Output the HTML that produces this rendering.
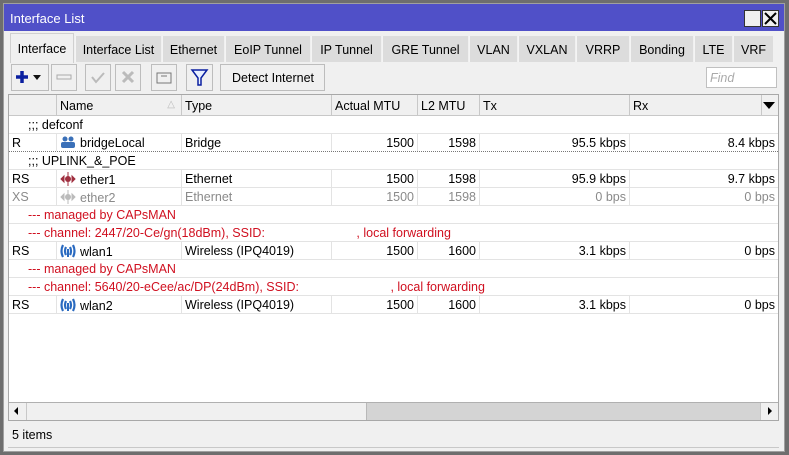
<!DOCTYPE html>
<html><head><meta charset="utf-8"><style>
*{box-sizing:border-box;margin:0;padding:0}
body{width:789px;height:455px;overflow:hidden;background:#6e6e6e;font-family:"Liberation Sans",Arial,sans-serif;font-size:12.5px;color:#000;position:relative}
.win{position:absolute;left:3px;top:3px;width:782px;height:449px;background:#f0f0f0;border:1px solid #a0a0a0}
.title{position:absolute;left:0;top:0;width:780px;height:27px;background:#5050c8;color:#fff;font-size:13px;padding:7px 0 0 6px}
.wb{position:absolute;top:6px;width:17px;height:17px;background:#f0f0f0;border:1px solid #333}
.tab{position:absolute;top:32px;height:26px;background:#dcdcdc;border-left:1px solid #f4f4f4;padding:7px 0 0 0;text-align:center}
.tab.a{top:29px;height:30px;background:#f0f0f0;border:1px solid #d0d0d0;border-bottom:none;padding-top:8px}
.btn{position:absolute;top:60px;height:27px;border:1px solid #bdbdbd;background:#f0f0f0}
.abs{position:absolute}
.tbl{position:absolute;left:4px;top:90px;width:771px;height:327px;background:#fff;border:1px solid #a8a8a8}
.hd{position:absolute;top:0;height:21px;background:#f0f0f0;border-right:1px solid #c8c8c8;border-bottom:1px solid #c8c8c8;padding:4px 0 0 3px}
.row{position:absolute;left:0;width:769px;height:18px;border-bottom:1px solid #e3e3e3}
.c{position:absolute;top:0;height:17px;padding:2px 3px 0 3px;white-space:nowrap}
.sep{border-right:1px solid #e3e3e3}
.r{text-align:right}
.g{color:#8a8a8a}
.red{color:#d01020}
</style></head><body>
<div class="win">
<div class="title">Interface List</div>
<div class="wb" style="left:740px"></div>
<div class="wb" style="left:758px"><svg width="15" height="15" style="position:absolute;left:0;top:0"><path d="M2 2L13 13M13 2L2 13" stroke="#000" stroke-width="2"/></svg></div>

<div class="tab a" style="left:6px;width:64px">Interface</div>
<div class="tab" style="left:71px;width:86px">Interface List</div>
<div class="tab" style="left:158px;width:62px">Ethernet</div>
<div class="tab" style="left:221px;width:85px">EoIP Tunnel</div>
<div class="tab" style="left:307px;width:70px">IP Tunnel</div>
<div class="tab" style="left:378px;width:86px">GRE Tunnel</div>
<div class="tab" style="left:465px;width:48px">VLAN</div>
<div class="tab" style="left:514px;width:57px">VXLAN</div>
<div class="tab" style="left:572px;width:53px">VRRP</div>
<div class="tab" style="left:626px;width:63px">Bonding</div>
<div class="tab" style="left:690px;width:38px">LTE</div>
<div class="tab" style="left:729px;width:40px">VRF</div>

<div class="btn" style="left:7px;width:38px"><svg width="36" height="25"><path d="M4 12H16M10 6V18" stroke="#0a1fa0" stroke-width="3.5"/><path d="M21 10H29L25 15Z" fill="#111"/></svg></div>
<div class="btn" style="left:47px;width:26px"><svg width="24" height="25"><rect x="5" y="10" width="14" height="4" fill="none" stroke="#aaa"/></svg></div>
<div class="btn" style="left:81px;width:26px"><svg width="24" height="25"><path d="M6 12L10 17L18 8" fill="none" stroke="#bbb" stroke-width="2"/></svg></div>
<div class="btn" style="left:111px;width:26px"><svg width="24" height="25"><path d="M7 7L17 17M17 7L7 17" stroke="#bbb" stroke-width="3"/></svg></div>
<div class="btn" style="left:147px;width:26px"><svg width="24" height="25"><rect x="5" y="8" width="14" height="10" fill="none" stroke="#777"/><path d="M9 11H15" stroke="#777"/></svg></div>
<div class="btn" style="left:182px;width:27px"><svg width="25" height="25"><path d="M5 5H20L14 13V20L11 20V13Z" fill="#e8f0ff" stroke="#0a1fa0" stroke-width="1.5"/></svg></div>
<div class="btn" style="left:216px;width:105px;padding:6px 0 0 11px">Detect Internet</div>
<div class="abs" style="left:702px;top:63px;width:71px;height:21px;background:#fff;border:1px solid #c0c0c0;color:#aaa;font-style:italic;padding:3px 0 0 3px">Find</div>

<div class="tbl">
<div class="hd" style="left:0;width:48px"></div>
<div class="hd" style="left:48px;width:125px">Name<span style="position:absolute;right:6px;color:#bbb;font-size:10px">&#9651;</span></div>
<div class="hd" style="left:173px;width:150px">Type</div>
<div class="hd" style="left:323px;width:86px">Actual MTU</div>
<div class="hd" style="left:409px;width:62px">L2 MTU</div>
<div class="hd" style="left:471px;width:150px">Tx</div>
<div class="hd" style="left:621px;width:132px">Rx</div>
<div class="hd" style="left:753px;width:16px;border-right:none"><svg width="12" height="10" style="position:absolute;left:1px;top:6px"><path d="M0 1H12L6 8Z" fill="#000"/></svg></div>

<div class="row" style="top:21px"><div class="c" style="left:16px">;;; defconf</div></div>
<div class="row" style="top:39px;border-bottom:1px dotted #777"><div class="c sep" style="left:0;width:48px">R</div><div class="c sep" style="left:48px;width:125px"><svg width="16" height="12" style="vertical-align:-1px;margin-right:4px"><circle cx="5" cy="3" r="2.5" fill="#3a70b8"/><circle cx="11" cy="3" r="2.5" fill="#3a70b8"/><rect x="1" y="6" width="14" height="6" rx="2" fill="#3a70b8"/></svg>bridgeLocal</div><div class="c sep" style="left:173px;width:150px">Bridge</div><div class="c sep r" style="left:323px;width:86px">1500</div><div class="c sep r" style="left:409px;width:62px">1598</div><div class="c sep r" style="left:471px;width:150px">95.5 kbps</div><div class="c r" style="left:621px;width:148px">8.4 kbps</div></div>
<div class="row" style="top:57px"><div class="c" style="left:16px">;;; UPLINK_&amp;_POE</div></div>
<div class="row" style="top:75px"><div class="c sep" style="left:0;width:48px">RS</div><div class="c sep" style="left:48px;width:125px"><svg width="16" height="14" style="vertical-align:-2px;margin-right:4px"><circle cx="8" cy="7" r="3" fill="#a03040"/><path d="M8 0V14M1 7L4 4V10ZM15 7L12 4V10Z" stroke="#a03040" fill="#a03040"/></svg>ether1</div><div class="c sep" style="left:173px;width:150px">Ethernet</div><div class="c sep r" style="left:323px;width:86px">1500</div><div class="c sep r" style="left:409px;width:62px">1598</div><div class="c sep r" style="left:471px;width:150px">95.9 kbps</div><div class="c r" style="left:621px;width:148px">9.7 kbps</div></div>
<div class="row g" style="top:93px"><div class="c sep" style="left:0;width:48px">XS</div><div class="c sep" style="left:48px;width:125px"><svg width="16" height="14" style="vertical-align:-2px;margin-right:4px"><circle cx="8" cy="7" r="3" fill="#bbb"/><path d="M8 0V14M1 7L4 4V10ZM15 7L12 4V10Z" stroke="#bbb" fill="#bbb"/></svg>ether2</div><div class="c sep" style="left:173px;width:150px">Ethernet</div><div class="c sep r" style="left:323px;width:86px">1500</div><div class="c sep r" style="left:409px;width:62px">1598</div><div class="c sep r" style="left:471px;width:150px">0 bps</div><div class="c r" style="left:621px;width:148px">0 bps</div></div>
<div class="row red" style="top:111px"><div class="c" style="left:16px">--- managed by CAPsMAN</div></div>
<div class="row red" style="top:129px"><div class="c" style="left:16px">--- channel: 2447/20-Ce/gn(18dBm), SSID: <span style="display:inline-block;width:88px"></span>, local forwarding</div></div>
<div class="row" style="top:147px"><div class="c sep" style="left:0;width:48px">RS</div><div class="c sep" style="left:48px;width:125px"><svg width="16" height="14" style="vertical-align:-2px;margin-right:4px"><path d="M3 1Q0 7 3 13M6 3Q4 7 6 11M13 1Q16 7 13 13M10 3Q12 7 10 11" stroke="#2a6ac0" stroke-width="2.2" fill="none"/><rect x="7" y="5" width="2" height="8" fill="#2a6ac0"/></svg>wlan1</div><div class="c sep" style="left:173px;width:150px">Wireless (IPQ4019)</div><div class="c sep r" style="left:323px;width:86px">1500</div><div class="c sep r" style="left:409px;width:62px">1600</div><div class="c sep r" style="left:471px;width:150px">3.1 kbps</div><div class="c r" style="left:621px;width:148px">0 bps</div></div>
<div class="row red" style="top:165px"><div class="c" style="left:16px">--- managed by CAPsMAN</div></div>
<div class="row red" style="top:183px"><div class="c" style="left:16px">--- channel: 5640/20-eCee/ac/DP(24dBm), SSID: <span style="display:inline-block;width:88px"></span>, local forwarding</div></div>
<div class="row" style="top:201px"><div class="c sep" style="left:0;width:48px">RS</div><div class="c sep" style="left:48px;width:125px"><svg width="16" height="14" style="vertical-align:-2px;margin-right:4px"><path d="M3 1Q0 7 3 13M6 3Q4 7 6 11M13 1Q16 7 13 13M10 3Q12 7 10 11" stroke="#2a6ac0" stroke-width="2.2" fill="none"/><rect x="7" y="5" width="2" height="8" fill="#2a6ac0"/></svg>wlan2</div><div class="c sep" style="left:173px;width:150px">Wireless (IPQ4019)</div><div class="c sep r" style="left:323px;width:86px">1500</div><div class="c sep r" style="left:409px;width:62px">1600</div><div class="c sep r" style="left:471px;width:150px">3.1 kbps</div><div class="c r" style="left:621px;width:148px">0 bps</div></div>

<div class="abs" style="left:0;top:307px;width:769px;height:18px;background:#d4d4d4;border-top:1px solid #b0b0b0">
<div class="abs" style="left:0;top:0;width:18px;height:17px;background:#f0f0f0;border-right:1px solid #c8c8c8"><svg width="17" height="17"><path d="M5 8L9 4V12Z" fill="#000"/></svg></div>
<div class="abs" style="left:18px;top:0;width:340px;height:17px;background:#f0f0f0;border-right:1px solid #b8b8b8"></div>
<div class="abs" style="left:751px;top:0;width:18px;height:17px;background:#f0f0f0;border-left:1px solid #c8c8c8"><svg width="17" height="17"><path d="M11 8L7 4V12Z" fill="#000"/></svg></div>
</div>
</div>
<div class="abs" style="left:8px;top:424px">5 items</div>
<div class="abs" style="left:4px;top:443px;width:771px;height:1px;background:#c8c8c8"></div>
</div>
</body></html>
